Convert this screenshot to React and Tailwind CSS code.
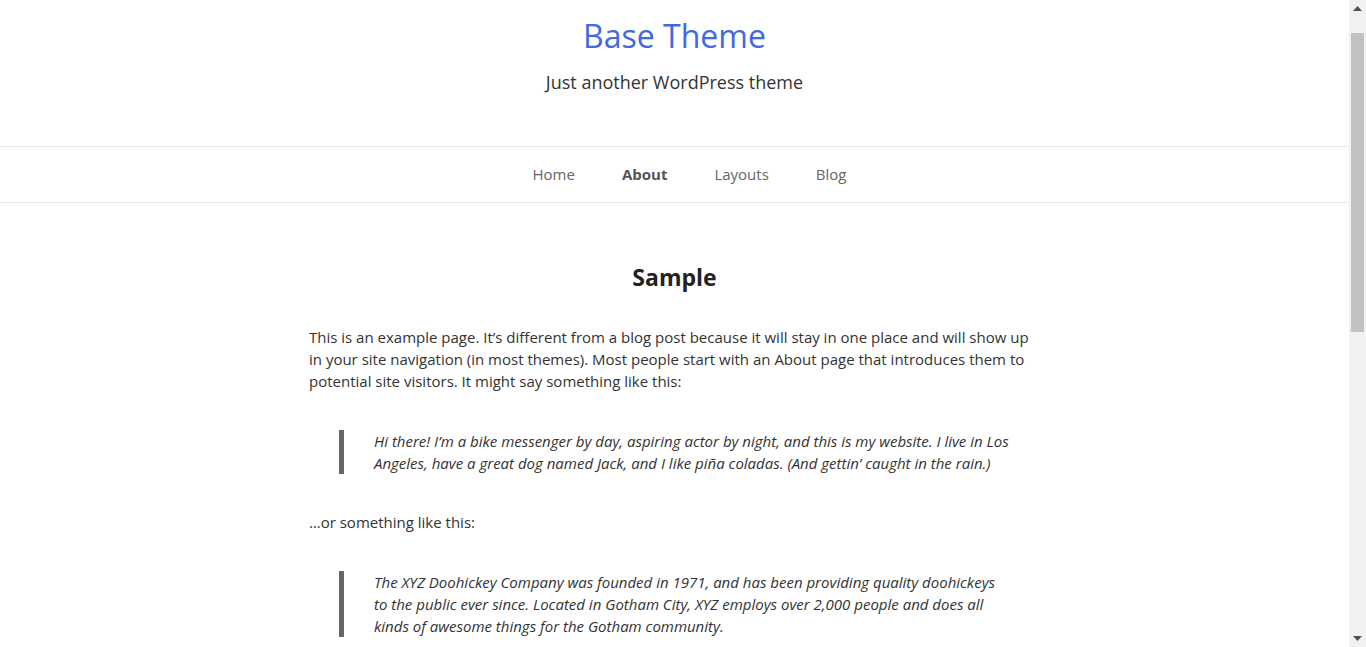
import React from 'react';

const navItems = [
  { label: 'Home', active: false },
  { label: 'About', active: true },
  { label: 'Layouts', active: false },
  { label: 'Blog', active: false },
];

function Header() {
  return (
    <header className="pt-4 pb-[52px] text-center">
      <h1 className="text-[32px] leading-[40px] text-[#4169e1]">Base Theme</h1>
      <p className="mt-[14px] text-[18px] leading-6 text-[#333]">Just another WordPress theme</p>
    </header>
  );
}

function Nav() {
  return (
    <nav className="border-y border-[#e8e8e8]">
      <ul className="flex justify-center gap-[47px] h-[55px] items-center pl-[30px]">
        {navItems.map((item) => (
          <li
            key={item.label}
            className={`text-[15px] ${item.active ? 'font-bold text-[#555]' : 'text-[#666]'}`}
          >
            {item.label}
          </li>
        ))}
      </ul>
    </nav>
  );
}

function Quote({ children }) {
  return (
    <blockquote className="mx-[30px] border-l-[5px] border-[#666] pl-[30px] italic text-[#333]">
      {children}
    </blockquote>
  );
}

// fake window scrollbar, the reference was shot with one showing
function Scrollbar() {
  return (
    <aside className="sticky top-0 h-[647px] w-[17px] shrink-0 bg-[#f1f1f1] flex flex-col items-center">
      <div className="h-[17px] flex items-center justify-center">
        <svg width="9" height="5" viewBox="0 0 9 5"><path d="M0 5 L4.5 0 L9 5 Z" fill="#505050" /></svg>
      </div>
      <div className="mt-4 h-[299px] w-[13px] bg-[#c1c1c1]" />
      <div className="flex-1" />
      <div className="h-[17px] flex items-center justify-center">
        <svg width="9" height="5" viewBox="0 0 9 5"><path d="M0 0 L9 0 L4.5 5 Z" fill="#505050" /></svg>
      </div>
    </aside>
  );
}

function App() {
  return (
    <div className="flex items-start bg-white" style={{ fontFamily: '"Open Sans", "Noto Sans", sans-serif' }}>
      <div className="flex-1 min-w-0 min-h-[1330px]">
        <Header />
        <Nav />

        {/* Page content */}
        <main className="mx-auto w-[731px] pt-[58px] pb-20 text-[15px] leading-[22px] text-[#333]">
          <h2 className="text-center text-[23px] leading-8 font-bold text-[#222]">Sample</h2>

          <p className="mt-[33px]">
            This is an example page. It’s different from a blog post because it will stay in one place and will show
            up in your site navigation (in most themes). Most people start with an About page that introduces them to
            potential site visitors. It might say something like this:
          </p>

          <div className="mt-[38px]">
            <Quote>
              Hi there! I’m a bike messenger by day, aspiring actor by night, and this is my website. I live in Los
              Angeles, have a great dog named Jack, and I like piña coladas. (And gettin’ caught in the rain.)
            </Quote>
          </div>

          <p className="mt-[37px]">…or something like this:</p>

          <div className="mt-[38px]">
            <Quote>
              The XYZ Doohickey Company was founded in 1971, and has been providing quality doohickeys to the public
              ever since. Located in Gotham City, XYZ employs over 2,000 people and does all kinds of awesome things
              for the Gotham community.
            </Quote>
          </div>

          <p className="mt-[38px]">
            As a new WordPress user, you should go to <span className="text-[#4169e1]">your dashboard</span> to
            delete this page and create new pages for your content. Have fun!
          </p>
        </main>

        <footer className="border-t border-[#e8e8e8] py-8 text-center text-[14px] text-[#666]">
          Proudly powered by WordPress
        </footer>
      </div>
      <Scrollbar />
    </div>
  );
}

export default App;
